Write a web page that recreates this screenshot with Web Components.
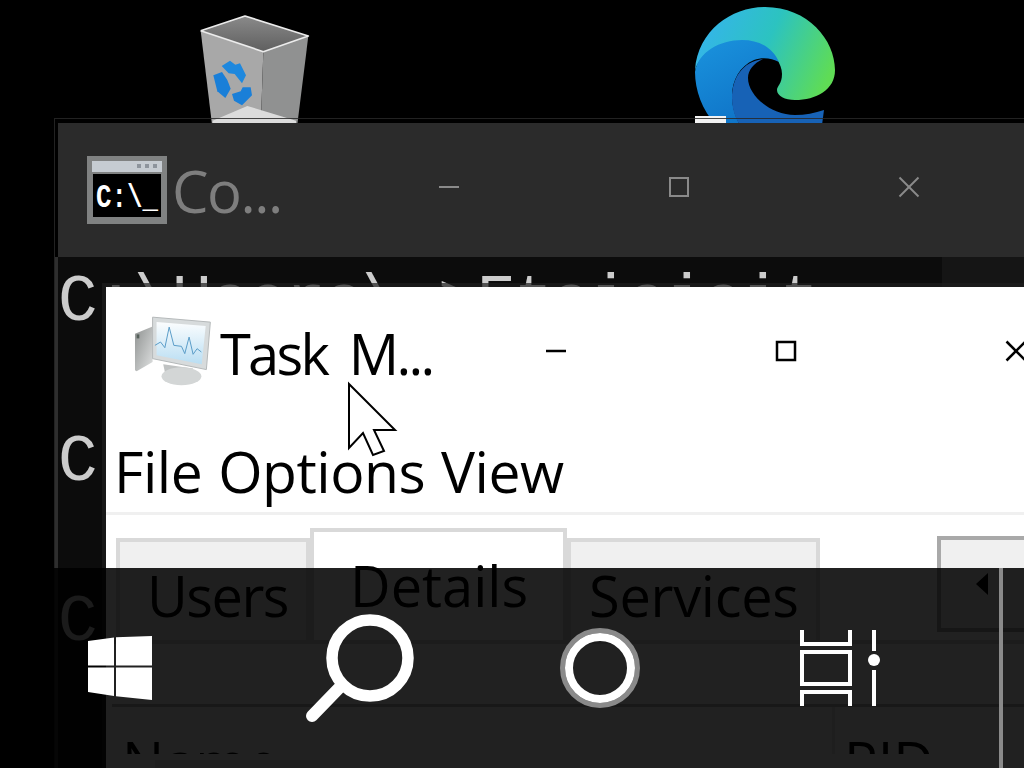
<!DOCTYPE html>
<html>
<head>
<meta charset="utf-8">
<title>Desktop</title>
<style>
    html, body { margin: 0; padding: 0; background: #000; }
</style>
</head>
<body>
<desk-top>
    <desk-icon style="left:170px;top:0">
        <svg width="170" height="130" viewBox="0 0 510 390">
            <defs>
                <linearGradient id="binInner" x1="0" y1="0" x2="0" y2="1">
                    <stop offset="0" stop-color="#8a8a8a"/>
                    <stop offset="1" stop-color="#5f5f5f"/>
                </linearGradient>
            </defs>
            <polygon points="92,92 225,48 415,108 280,155" fill="url(#binInner)"/>
            <polygon points="92,92 280,155 272,390 128,390" fill="#a8a8a8"/>
            <polygon points="280,155 415,108 380,390 272,390" fill="#909191"/>
            <polygon points="128,362 232,318 378,362 378,372 128,372" fill="#dcdcdc"/>
            <polyline points="92,92 225,48 415,108 280,155 92,92" fill="none" stroke="#ececec" stroke-width="5" stroke-linejoin="round"/>
            <path d="M155 198 L180 182 L196 194 L210 190 L228 226 L216 250 L194 222 L176 220Z" fill="#1e88de"/>
            <path d="M130 226 L156 216 L172 240 L182 266 L166 294 L142 274Z" fill="#1a7fd8"/>
            <path d="M186 282 L212 274 L218 262 L242 262 L246 286 L216 316 L192 302Z" fill="#1a7fd8"/>
        </svg>
    </desk-icon>
    <desk-icon style="left:670px;top:0">
        <svg width="190" height="130" viewBox="0 0 190 130">
            <defs>
                <linearGradient id="edgeTop" x1="0" y1="0.3" x2="1" y2="0.6">
                    <stop offset="0" stop-color="#35b4ec"/>
                    <stop offset="0.5" stop-color="#2cc3c0"/>
                    <stop offset="1" stop-color="#5fdc55"/>
                </linearGradient>
                <linearGradient id="edgeBlue" x1="0" y1="0" x2="0.5" y2="1">
                    <stop offset="0" stop-color="#1a93dd"/>
                    <stop offset="1" stop-color="#0f74c8"/>
                </linearGradient>
            </defs>
            <path d="M25 70 C28 30 62 7 95 7 C138 7 165 40 165 70 C165 90 146 100 125 100 C115 100 107 96 107 90 C107 86 112 84 112 74 C112 60 98 46 80 42 C55 38 32 50 25 70Z" fill="url(#edgeTop)"/>
            <path d="M25 72 C28 52 50 40 72 40 C92 40 104 50 109 62 C102 58 92 57 84 60 C70 66 62 80 62 96 C62 108 66 118 70 125 L46 125 C32 110 25 90 25 72Z" fill="url(#edgeBlue)"/>
            <path d="M62 98 C62 78 72 62 93 59 C84 63 78 70 78 78 C78 95 100 115 125 115 C135 115 145 113 154 110 L152 125 L70 125 C65 118 62 108 62 98Z" fill="#1762b6"/>
            <rect x="25" y="116" width="31" height="8" fill="#f2f2f2"/>
        </svg>
    </desk-icon>

    <cmd-window>
        <svg slot="icon" width="80" height="68" viewBox="0 0 80 68">
            <rect width="80" height="68" fill="#808282"/>
            <rect x="5" y="5" width="70" height="11" fill="#c6ccd2"/>
            <rect x="50" y="8" width="4" height="4" fill="#8d949c"/>
            <rect x="58" y="8" width="4" height="4" fill="#8d949c"/>
            <rect x="66" y="8" width="4" height="4" fill="#8d949c"/>
            <rect x="6" y="18" width="68" height="43" fill="#000"/>
            <text x="9" y="51" font-family="Liberation Mono" font-weight="700" font-size="34" fill="#fff" textLength="62" lengthAdjust="spacingAndGlyphs">C:\_</text>
        </svg>
    </cmd-window>

    <task-manager>
        <svg slot="icon" width="79" height="72" viewBox="102 114 238 216">
            <defs>
                <linearGradient id="tmScreen" x1="0" y1="0" x2="0" y2="1">
                    <stop offset="0" stop-color="#fbfdfe"/>
                    <stop offset="1" stop-color="#b9def3"/>
                </linearGradient>
                <linearGradient id="tmTower" x1="0" y1="0" x2="1" y2="1">
                    <stop offset="0" stop-color="#8f9291"/>
                    <stop offset="1" stop-color="#dfe1e1"/>
                </linearGradient>
            </defs>
            <polygon points="105,170 158,148 158,255 110,283 105,280" fill="url(#tmTower)"/>
            <rect x="110" y="172" width="8" height="12" fill="#55605a"/>
            <polygon points="190,262 280,275 275,292 195,285" fill="#bfc2c2"/>
            <ellipse cx="245" cy="298" rx="60" ry="27" fill="#d3d6d6"/>
            <polygon points="158,120 332,135 320,278 158,245" fill="#d7dbdc" stroke="#b4b8b9" stroke-width="3"/>
            <polygon points="170,135 318,147 306,262 170,235" fill="url(#tmScreen)"/>
            <polyline points="165,205 182,195 195,212 208,150 222,205 245,208 255,230 268,180 280,232 292,215 305,225" fill="none" stroke="#5a9cc8" stroke-width="3"/>
        </svg>
    </task-manager>

    <mouse-pointer></mouse-pointer>

    <task-bar>
        <task-button>
            <svg width="64" height="64" viewBox="0 0 64 64">
                <polygon points="0,5 26,1.5 26,29.5 0,29.5" fill="#fff"/>
                <polygon points="28,1.2 64,0 64,29.5 28,29.5" fill="#fff"/>
                <polygon points="0,31.5 26,31.5 26,60 0,56" fill="#fff"/>
                <polygon points="28,31.5 64,31.5 64,64 28,60.3" fill="#fff"/>
            </svg>
        </task-button>
        <task-button>
            <svg width="108" height="108" viewBox="0 0 108 108">
                <circle cx="64" cy="44" r="38" fill="none" stroke="#fff" stroke-width="11.5"/>
                <line x1="36" y1="71" x2="6" y2="102" stroke="#fff" stroke-width="12" stroke-linecap="round"/>
            </svg>
        </task-button>
        <task-button>
            <svg width="80" height="80" viewBox="0 0 80 80">
                <circle cx="40" cy="40" r="37.5" fill="none" stroke="#8a8a8a" stroke-width="5"/>
                <circle cx="40" cy="40" r="31" fill="none" stroke="#fff" stroke-width="8"/>
            </svg>
        </task-button>
        <task-button>
            <svg width="80" height="76" viewBox="0 0 80 76">
                <path d="M2 0V14H50V0" fill="none" stroke="#fff" stroke-width="4"/>
                <rect x="2" y="22" width="48" height="32" fill="none" stroke="#fff" stroke-width="4"/>
                <path d="M2 76V62H50V76" fill="none" stroke="#fff" stroke-width="4"/>
                <line x1="74" y1="0" x2="74" y2="21" stroke="#fff" stroke-width="4"/>
                <circle cx="74" cy="30" r="6" fill="#fff"/>
                <line x1="74" y1="40" x2="74" y2="76" stroke="#fff" stroke-width="4"/>
            </svg>
        </task-button>
    </task-bar>
</desk-top>

<script>
const UI_FONT = "'Open Sans', 'Noto Sans', sans-serif";

const minGlyph = (color, weight) => `
    <svg class="glyph" width="24" height="24" viewBox="0 0 24 24" fill="none" stroke="${color}" stroke-width="${weight}">
        <line x1="2" y1="12" x2="22" y2="12"/>
    </svg>`;
const maxGlyph = (color, weight) => `
    <svg class="glyph" width="24" height="24" viewBox="0 0 24 24" fill="none" stroke="${color}" stroke-width="${weight}">
        <rect x="3" y="3" width="18" height="18"/>
    </svg>`;
const closeGlyph = (color, weight) => `
    <svg class="glyph" width="24" height="24" viewBox="0 0 24 24" fill="none" stroke="${color}" stroke-width="${weight}">
        <line x1="2.5" y1="2.5" x2="21.5" y2="21.5"/>
        <line x1="21.5" y1="2.5" x2="2.5" y2="21.5"/>
    </svg>`;

class DeskTop extends HTMLElement {
    constructor() {
        super();
        this.attachShadow({ mode: 'open' });
    }

    connectedCallback() {
        this.shadowRoot.innerHTML = `
            <style>
                :host {
                    display: block;
                    position: relative;
                    width: 1024px;
                    height: 768px;
                    overflow: hidden;
                    background: #000;
                    font-family: ${UI_FONT};
                }
            </style>
            <slot></slot>
        `;
    }
}

class DeskIcon extends HTMLElement {
    constructor() {
        super();
        this.attachShadow({ mode: 'open' });
    }

    connectedCallback() {
        this.shadowRoot.innerHTML = `
            <style>
                :host { position: absolute; display: block; line-height: 0; }
            </style>
            <slot></slot>
        `;
    }
}

// Title bar shared by both windows: icon, clipped label, three caption buttons 230px apart
class WinCaption extends HTMLElement {
    constructor() {
        super();
        this.attachShadow({ mode: 'open' });
    }

    connectedCallback() {
        const color = this.getAttribute('glyph') || '#000';
        const weight = this.getAttribute('weight') || '2';
        this.shadowRoot.innerHTML = `
            <style>
                :host {
                    display: flex;
                    align-items: center;
                    flex: none;
                    height: var(--caption-height);
                    padding-left: var(--caption-pad);
                    background: var(--caption-bg);
                }
                .icon { display: flex; flex: none; }
                .label {
                    flex: none;
                    box-sizing: border-box;
                    width: var(--label-width);
                    padding-left: var(--label-gap);
                    padding-top: var(--label-drop, 0);
                    color: var(--caption-color);
                    font-size: var(--caption-size);
                    letter-spacing: var(--caption-track, 0);
                    word-spacing: var(--caption-word, 0);
                    white-space: nowrap;
                }
                .btn {
                    flex: none;
                    width: 230px;
                    margin-bottom: var(--glyph-lift, 0);
                    display: flex;
                    align-items: center;
                    justify-content: center;
                }
                .glyph { display: block; }
            </style>
            <div class="icon"><slot name="icon"></slot></div>
            <div class="label"><slot></slot></div>
            <div class="btn">${minGlyph(color, weight)}</div>
            <div class="btn">${maxGlyph(color, weight)}</div>
            <div class="btn">${closeGlyph(color, weight)}</div>
        `;
    }
}

class CmdWindow extends HTMLElement {
    constructor() {
        super();
        this.attachShadow({ mode: 'open' });
    }

    connectedCallback() {
        this.shadowRoot.innerHTML = `
            <style>
                :host {
                    position: absolute;
                    left: 54px;
                    top: 118px;
                    width: 1100px;
                    height: 700px;
                    display: flex;
                    flex-direction: column;
                    box-sizing: border-box;
                    border: 1px solid rgba(40, 40, 40, 0.85);
                    padding: 4px 0 0 3px;
                }
                win-caption {
                    --caption-height: 134px;
                    --caption-pad: 29px;
                    --caption-bg: #2b2b2b;
                    --caption-color: #7e7e7e;
                    --caption-size: 58px;
                    --caption-track: -1.5px;
                    --label-width: 167px;
                    --label-gap: 5px;
                    --glyph-lift: 6px;
                }
                .body {
                    flex: 1;
                    display: flex;
                    margin-left: -3px;
                    border-left: 3px solid #2e2e2e;
                }
                .screen {
                    flex: none;
                    width: 884px;
                    box-sizing: border-box;
                    background: #0c0c0c;
                    color: #cccccc;
                    font-family: 'Liberation Mono', monospace;
                    font-size: 66px;
                    letter-spacing: -1.6px;
                    line-height: 160px;
                    white-space: nowrap;
                    overflow: hidden;
                }
                .screen div:first-child { margin-top: -34px; }
                .gutter { flex: 1; background: #151515; }
            </style>
            <win-caption glyph="#8a8a8a" weight="2">
                <slot name="icon" slot="icon"></slot>
                Co...
            </win-caption>
            <div class="body">
                <div class="screen">
                    <div>C:\\Users\\&nbsp;&gt;Ftaiaiait</div>
                    <div>C:\\Users\\&gt;</div>
                    <div>C:\\Users\\&gt;</div>
                </div>
                <div class="gutter"></div>
            </div>
        `;
    }
}

class TmTab extends HTMLElement {
    constructor() {
        super();
        this.attachShadow({ mode: 'open' });
    }

    connectedCallback() {
        this.shadowRoot.innerHTML = `
            <style>
                :host {
                    display: block;
                    flex: none;
                    box-sizing: border-box;
                    height: 102px;
                    border: 4px solid #d9d9d9;
                    border-bottom: 0;
                    background: #f0f0f0;
                    color: #000;
                    font-size: 56px;
                    line-height: 106px;
                    white-space: nowrap;
                }
                :host([selected]) {
                    height: 112px;
                    background: #fff;
                }
            </style>
            <slot></slot>
        `;
    }
}

class TaskManager extends HTMLElement {
    constructor() {
        super();
        this.attachShadow({ mode: 'open' });
    }

    connectedCallback() {
        this.shadowRoot.innerHTML = `
            <style>
                :host {
                    position: absolute;
                    left: 106px;
                    top: 287px;
                    width: 1000px;
                    height: 481px;
                    display: flex;
                    flex-direction: column;
                    background: #fff;
                    overflow: hidden;
                    color: #000;
                    box-shadow: 0 0 0 4px rgba(30, 30, 30, 0.7);
                }
                win-caption {
                    --caption-height: 128px;
                    --caption-pad: 28px;
                    --caption-bg: #fff;
                    --caption-color: #000;
                    --caption-size: 56px;
                    --caption-track: -2.75px;
                    --caption-word: 10px;
                    --label-width: 228px;
                    --label-gap: 7px;
                    --label-drop: 4px;
                }
                .menu {
                    flex: none;
                    display: flex;
                    gap: 16px;
                    height: 100px;
                    padding-left: 8px;
                    box-sizing: border-box;
                    border-bottom: 3px solid #f0f0f0;
                    font-size: 57px;
                    line-height: 112px;
                    letter-spacing: -0.5px;
                }
                .tabs {
                    flex: none;
                    display: flex;
                    align-items: flex-end;
                    height: 125px;
                    padding-left: 10px;
                    box-sizing: border-box;
                }
                .users { width: 194px; padding-left: 27px; letter-spacing: -1.5px; }
                .details { width: 257px; padding-left: 36px; }
                .services { width: 253px; padding-left: 18px; letter-spacing: -0.3px; }
                .scroller {
                    flex: none;
                    box-sizing: border-box;
                    display: flex;
                    align-items: center;
                    width: 200px;
                    height: 96px;
                    margin: 0 0 8px 117px;
                    padding-left: 35px;
                    border: 4px solid #a9a9a9;
                    background: #f0f0f0;
                }
                .panel {
                    flex: 1;
                    display: flex;
                    flex-direction: column;
                    border-top: 4px solid #d9d9d9;
                    padding: 60px 0 0 6px;
                }
                .head {
                    flex: none;
                    display: flex;
                    height: 47px;
                    overflow: hidden;
                    border-top: 3px solid #b8b8b8;
                    font-size: 56px;
                    line-height: 108px;
                }
                .name { flex: none; width: 723px; padding-left: 10px; box-sizing: border-box; border-right: 3px solid #e8e8e8; }
                .pid { flex: none; padding-left: 9px; }
                .rows { flex: 1; padding: 6px 0 0 43px; }
                .row { width: 165px; height: 30px; background: #e6e6e6; }
            </style>
            <win-caption glyph="#000" weight="2.5">
                <slot name="icon" slot="icon"></slot>
                Task M...
            </win-caption>
            <div class="menu">
                <span>File</span><span>Options</span><span>View</span>
            </div>
            <div class="tabs">
                <tm-tab class="users">Users</tm-tab>
                <tm-tab class="details" selected>Details</tm-tab>
                <tm-tab class="services">Services</tm-tab>
                <div class="scroller">
                    <svg width="12" height="22" viewBox="0 0 12 22"><polygon points="12,0 12,22 0,11" fill="#000"/></svg>
                </div>
            </div>
            <div class="panel">
                <div class="head">
                    <div class="name">Name</div>
                    <div class="pid">PID</div>
                </div>
                <div class="rows"><div class="row"></div></div>
            </div>
        `;
    }
}

class MousePointer extends HTMLElement {
    constructor() {
        super();
        this.attachShadow({ mode: 'open' });
    }

    connectedCallback() {
        this.shadowRoot.innerHTML = `
            <style>
                :host { position: absolute; left: 346px; top: 380px; display: block; line-height: 0; }
            </style>
            <svg width="54" height="78" viewBox="346 380 54 78">
                <polygon points="349,384 395,430 374,430 384,451 373,455 363,433 349,448" fill="#fff" stroke="#000" stroke-width="2" stroke-linejoin="miter"/>
            </svg>
        `;
    }
}

class TaskBar extends HTMLElement {
    constructor() {
        super();
        this.attachShadow({ mode: 'open' });
    }

    connectedCallback() {
        this.shadowRoot.innerHTML = `
            <style>
                :host {
                    position: absolute;
                    left: 0;
                    right: 0;
                    bottom: 0;
                    height: 200px;
                    display: flex;
                    background: rgba(0, 0, 0, 0.87);
                }
                .edge {
                    flex: none;
                    width: 4px;
                    margin-left: 39px;
                    background: #8a8a8a;
                }
            </style>
            <slot></slot>
            <div class="edge"></div>
        `;
    }
}

class TaskButton extends HTMLElement {
    constructor() {
        super();
        this.attachShadow({ mode: 'open' });
    }

    connectedCallback() {
        this.shadowRoot.innerHTML = `
            <style>
                :host {
                    display: flex;
                    flex: none;
                    width: 240px;
                    align-items: center;
                    justify-content: center;
                }
            </style>
            <slot></slot>
        `;
    }
}

customElements.define('desk-top', DeskTop);
customElements.define('desk-icon', DeskIcon);
customElements.define('win-caption', WinCaption);
customElements.define('cmd-window', CmdWindow);
customElements.define('tm-tab', TmTab);
customElements.define('task-manager', TaskManager);
customElements.define('mouse-pointer', MousePointer);
customElements.define('task-bar', TaskBar);
customElements.define('task-button', TaskButton);
</script>
</body>
</html>
